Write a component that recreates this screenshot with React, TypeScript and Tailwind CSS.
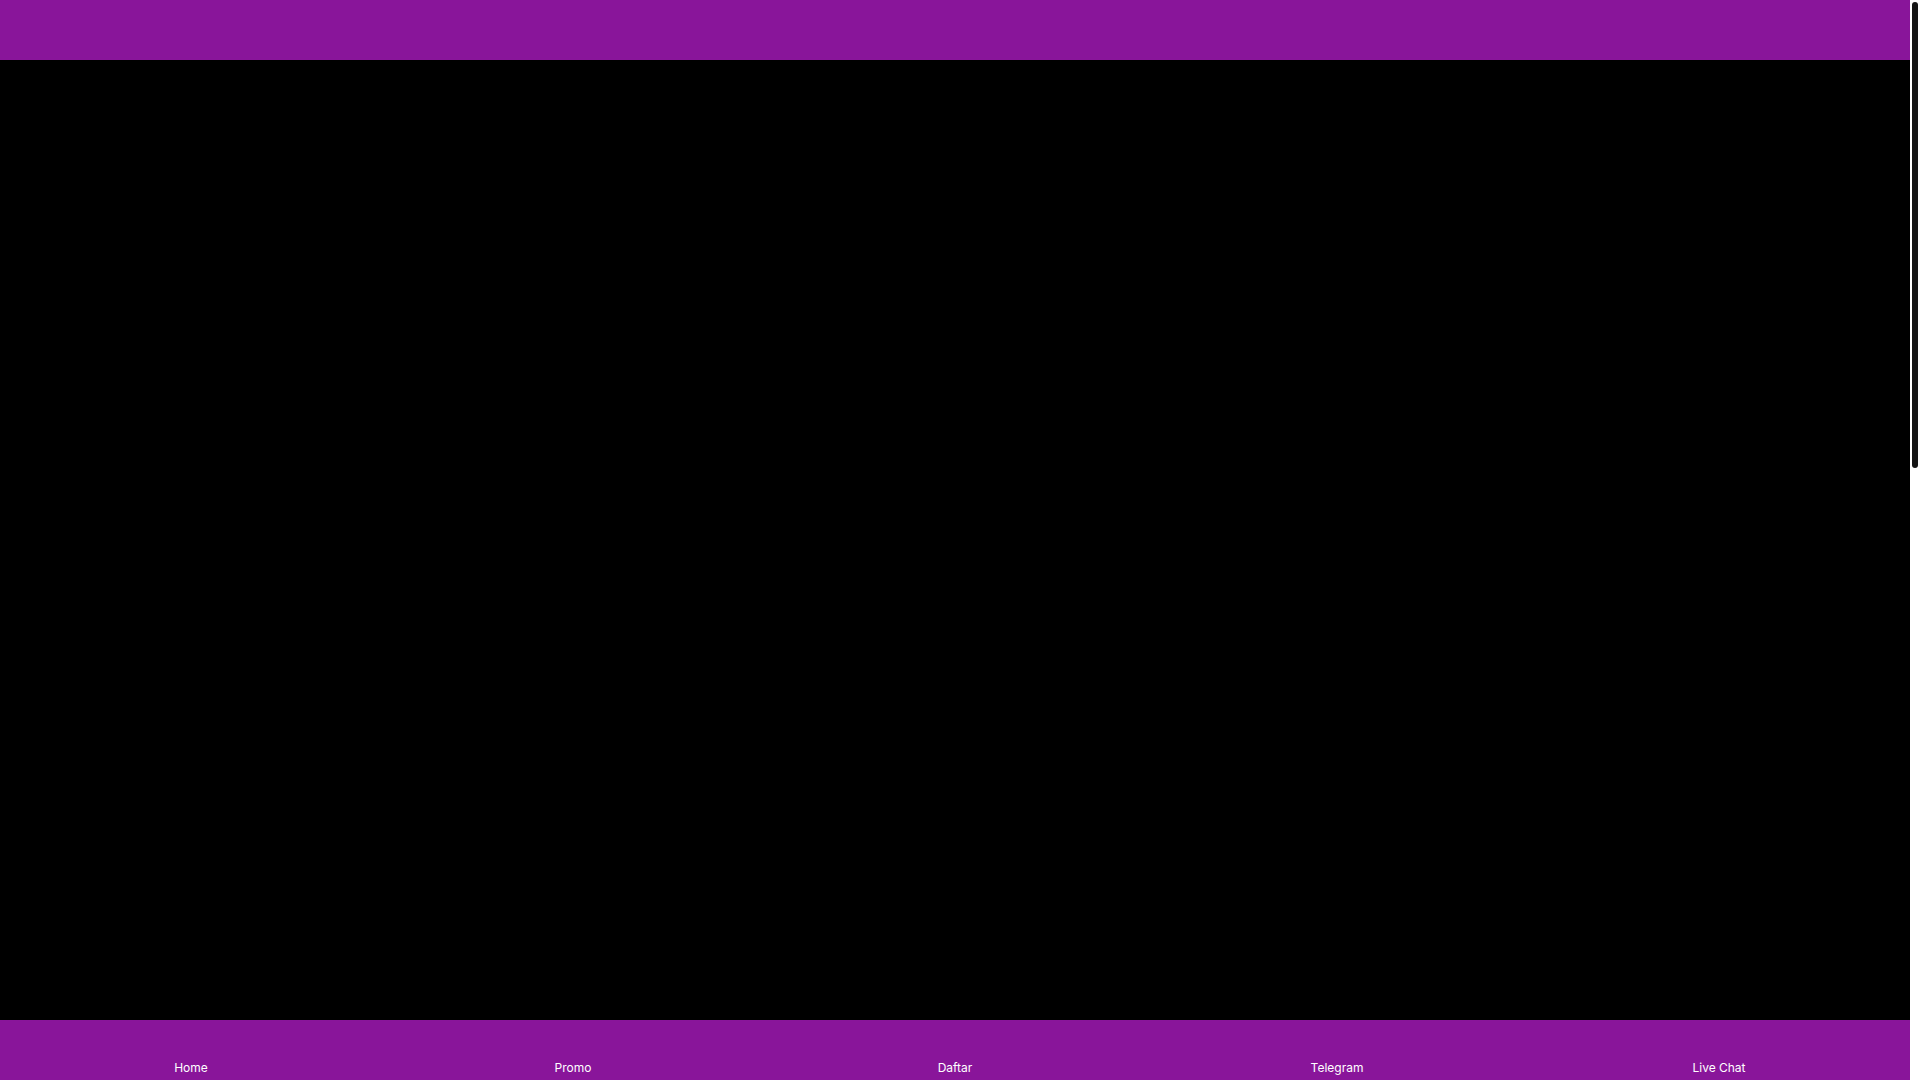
const navItems = ['Home', 'Promo', 'Daftar', 'Telegram', 'Live Chat']

export default function App() {
  return (
    <div className="flex h-screen overflow-hidden bg-white font-['Inter',sans-serif]">
      <div className="flex min-w-0 flex-1 flex-col bg-black">
        {/* Top bar */}
        <header className="h-[60px] shrink-0 bg-[#89159a]" />

        {/* Main content (empty, black) */}
        <main className="flex-1 bg-black" />

        {/* Bottom nav */}
        <nav className="grid h-[60px] shrink-0 grid-cols-5 overflow-hidden bg-[#89159a]">
          {navItems.map(item => (
            <a key={item} href="#" className="flex flex-col items-center pt-[40px] text-xs leading-4 text-white">
              {item}
            </a>
          ))}
        </nav>
      </div>

      {/* Scrollbar track */}
      <div className="w-[10px] shrink-0 bg-white px-[2px] pt-[2px]">
        <div className="h-[466px] rounded-full bg-[#151515]" />
      </div>
    </div>
  )
}
